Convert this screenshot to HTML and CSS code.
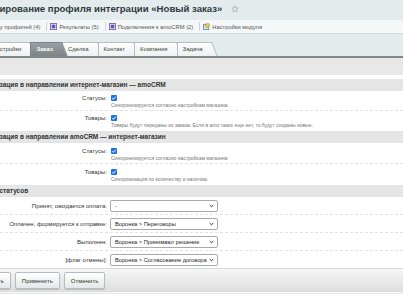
FILE: index.html
```html
<!DOCTYPE html>
<html lang="ru">
<head>
<meta charset="utf-8">
<link rel="stylesheet" href="styles.css">
</head>
<body>
<div class="hdr">
  <h1 class="title">Редактирование профиля интеграции «Новый заказ»</h1>
  <svg class="star" viewBox="0 0 10 10"><path d="M5 0.8 L6.2 3.6 L9.2 3.8 L6.9 5.8 L7.6 8.8 L5 7.2 L2.4 8.8 L3.1 5.8 L0.8 3.8 L3.8 3.6 Z" fill="none" stroke="#9aa4a8" stroke-width="0.8"/></svg>
</div>
<div class="toolbar">
  <span class="tb-item tb-first">К списку профилей (4)</span>
  <span class="sep"></span>
  <span class="tb-item"><svg class="ico" viewBox="0 0 8 8"><rect x="0.5" y="0.5" width="7" height="7" fill="#e9e4f5" stroke="#7a5fb8"/><rect x="2" y="2" width="4" height="4" fill="#6a4fb0"/></svg>Результаты (5)</span>
  <span class="sep"></span>
  <span class="tb-item"><svg class="ico" viewBox="0 0 8 8"><rect x="0.5" y="0.5" width="7" height="7" fill="#e9e4f5" stroke="#7a5fb8"/><rect x="2" y="2" width="4" height="4" fill="#6a4fb0"/></svg>Подключения к amoCRM (2)</span>
  <span class="sep"></span>
  <span class="tb-item"><svg class="ico" viewBox="0 0 8 8"><rect x="0.5" y="1.5" width="6" height="6" fill="#cfe0f2" stroke="#6d8fb5"/><circle cx="5.2" cy="2.8" r="2.3" fill="#f2c84b" stroke="#b08a1c" stroke-width="0.6"/></svg>Настройки модуля</span>
</div>
<div class="tabs">
  <div class="tab tab-first">Настройки</div>
  <div class="tab active">Заказ</div>
  <div class="tab">Сделка</div>
  <div class="tab">Контакт</div>
  <div class="tab">Компания</div>
  <div class="tab">Задача</div>
</div>
<div class="panel">
  <div class="subbar"></div>
  <div class="form">
    <div class="heading"><span class="h-a">Синхронизация в направлении интернет-магазин — amoCRM</span></div>
    <div class="row">
      <div class="label">Статусы:</div>
      <div class="field"><span class="check"><svg viewBox="0 0 8 8"><path d="M1.6 4.2 L3.3 5.8 L6.4 2.2" fill="none" stroke="#fff" stroke-width="1.3"/></svg></span><div class="note">Синхронизируется согласно настройкам магазина</div></div>
    </div>
    <div class="row end">
      <div class="label">Товары:</div>
      <div class="field"><span class="check"><svg viewBox="0 0 8 8"><path d="M1.6 4.2 L3.3 5.8 L6.4 2.2" fill="none" stroke="#fff" stroke-width="1.3"/></svg></span><div class="note">Товары будут переданы из заказа. Если в amo таких еще нет, то будут созданы новые.</div></div>
    </div>
    <div class="heading"><span class="h-a">Синхронизация в направлении amoCRM — интернет-магазин</span></div>
    <div class="row tall">
      <div class="label">Статусы:</div>
      <div class="field"><span class="check"><svg viewBox="0 0 8 8"><path d="M1.6 4.2 L3.3 5.8 L6.4 2.2" fill="none" stroke="#fff" stroke-width="1.3"/></svg></span><div class="note">Синхронизируется согласно настройкам магазина</div></div>
    </div>
    <div class="row tall end">
      <div class="label">Товары:</div>
      <div class="field"><span class="check"><svg viewBox="0 0 8 8"><path d="M1.6 4.2 L3.3 5.8 L6.4 2.2" fill="none" stroke="#fff" stroke-width="1.3"/></svg></span><div class="note">Синхронизация по количеству и наличию</div></div>
    </div>
    <div class="heading"><span class="h-b">Соответствие статусов</span></div>
    <div class="srow">
      <div class="label">Принят, ожидается оплата:</div>
      <div class="select"><span>-</span><svg class="chev" viewBox="0 0 6 4"><path d="M0.8 0.8 L3 3 L5.2 0.8" fill="none" stroke="#222" stroke-width="1.1"/></svg></div>
    </div>
    <div class="srow">
      <div class="label">Оплачен, формируется к отправке:</div>
      <div class="select"><span>Воронка &gt; Переговоры</span><svg class="chev" viewBox="0 0 6 4"><path d="M0.8 0.8 L3 3 L5.2 0.8" fill="none" stroke="#222" stroke-width="1.1"/></svg></div>
    </div>
    <div class="srow">
      <div class="label">Выполнен:</div>
      <div class="select"><span>Воронка &gt; Принимают решение</span><svg class="chev" viewBox="0 0 6 4"><path d="M0.8 0.8 L3 3 L5.2 0.8" fill="none" stroke="#222" stroke-width="1.1"/></svg></div>
    </div>
    <div class="srow last">
      <div class="label">[флаг отмены]:</div>
      <div class="select"><span>Воронка &gt; Согласование договора</span><svg class="chev" viewBox="0 0 6 4"><path d="M0.8 0.8 L3 3 L5.2 0.8" fill="none" stroke="#222" stroke-width="1.1"/></svg></div>
    </div>
  </div>
</div>
<div class="buttons">
  <button class="btn btn-first">Сохранить</button>
  <button class="btn">Применить</button>
  <button class="btn">Отменить</button>
</div>
</body>
</html>
```
FILE: styles.css
```css
html, body {
  margin: 0;
  padding: 0;
}
body {
  width: 403px;
  height: 294px;
  overflow: hidden;
  background: #e3ebed;
  font-family: "Liberation Sans", Arial, sans-serif;
  color: #333;
}
.hdr {
  display: flex;
  align-items: center;
  height: 17px;
  white-space: nowrap;
}
.title {
  margin: 0 0 0 -33px;
  font-size: 9.6px;
  font-weight: bold;
  color: #2f3a40;
  line-height: 17px;
}
.star {
  width: 8px;
  height: 8px;
  margin-left: 9px;
}
.toolbar {
  margin-top: 3px;
  height: 13px;
  display: flex;
  align-items: center;
  background: #f5f8f8;
  border-bottom: 1px solid #d3dcdf;
  font-size: 5.8px;
  color: #555;
  white-space: nowrap;
}
.tb-item {
  display: flex;
  align-items: center;
}
.tb-first {
  margin-left: -20px;
}
.ico {
  width: 7px;
  height: 7px;
  margin-right: 2px;
}
.sep {
  width: 1px;
  height: 9px;
  background: #cdd5d8;
  margin: 0 3px 0 6px;
}
.tabs {
  margin-top: 6px;
  height: 16px;
  display: flex;
  align-items: flex-end;
  font-size: 6px;
  color: #444;
  white-space: nowrap;
}
.tab {
  position: relative;
  height: 14px;
  line-height: 14px;
  padding: 0 12px 0 6px;
  margin-right: -3px;
  z-index: 1;
}
.tab::before {
  content: "";
  position: absolute;
  left: 0;
  top: 0;
  bottom: 0;
  right: 8px;
  background: linear-gradient(#fdfefe, #edf1f2);
  border-left: 1px solid #b3bec2;
  border-top: 1px solid #b3bec2;
  z-index: -1;
}
.tab::after {
  content: "";
  position: absolute;
  top: 0;
  bottom: 0;
  right: 3px;
  width: 10px;
  background: linear-gradient(#fdfefe, #edf1f2);
  border-top: 1px solid #b3bec2;
  border-right: 1px solid #b3bec2;
  transform: skewX(22deg);
  transform-origin: top left;
  z-index: -1;
}
.tab-first {
  padding-left: 0;
  margin-left: -8px;
}
.tab.active {
  color: #fff;
  font-weight: bold;
  z-index: 2;
}
.tab.active::before,
.tab.active::after {
  background: linear-gradient(#9aa0a3, #7d8487);
  border-color: #7b8285;
}
.panel {
  background: #fff;
}
.subbar {
  height: 17px;
  background: #e8e8e8;
  border-top: 2px solid #80878a;
  margin-bottom: 4px;
}
.heading {
  height: 12px;
  line-height: 12px;
  background: #e5e5e5;
  font-size: 6.5px;
  font-weight: bold;
  color: #333;
  white-space: nowrap;
}
.h-a {
  margin-left: -32.5px;
}
.h-b {
  margin-left: -47px;
}
.row {
  display: grid;
  grid-template-columns: 107px 1fr;
  column-gap: 4px;
  height: 20px;
  padding-top: 3px;
  box-sizing: border-box;
  border-bottom: 1px dashed #e2e2e2;
}
.row.tall {
  height: 21px;
  padding-top: 4px;
}
.row.end {
  border-bottom: none;
}
.label {
  font-size: 6px;
  line-height: 8px;
  text-align: right;
  color: #333;
  white-space: nowrap;
}
.field {
  display: flex;
  flex-direction: column;
  align-items: flex-start;
}
.check {
  display: block;
  width: 6px;
  height: 6px;
  margin-top: 1px;
  background: #1a73e8;
  border-radius: 1px;
}
.check svg {
  display: block;
  width: 6px;
  height: 6px;
}
.note {
  margin-top: 1px;
  font-size: 5px;
  line-height: 6px;
  color: #777;
  white-space: nowrap;
}
.srow {
  display: grid;
  grid-template-columns: 107px 108px;
  column-gap: 3px;
  align-items: center;
  height: 18px;
  box-sizing: border-box;
  border-bottom: 1px dashed #e2e2e2;
}
.srow.last {
  border-bottom: 1px solid #d8d8d8;
}
.srow .label {
  line-height: 12px;
}
.select {
  height: 12px;
  box-sizing: border-box;
  border: 1px solid #a9a9a9;
  border-radius: 2px;
  background: #fff;
  display: flex;
  align-items: center;
  justify-content: space-between;
  padding: 0 3px 0 4px;
  font-size: 5.7px;
  color: #222;
  white-space: nowrap;
}
.chev {
  width: 5px;
  height: 4px;
}
.buttons {
  height: 23px;
  display: flex;
  align-items: center;
  gap: 4px;
  background: linear-gradient(#f6f6f6, #dedede);
  border-bottom: 1px solid #f4f7f8;
}
.btn {
  height: 17px;
  padding: 0 6px;
  border: 1px solid #b6bdc0;
  border-radius: 2px;
  background: linear-gradient(#ffffff, #e4e8e9);
  box-shadow: 0 1px 1px rgba(0, 0, 0, 0.15);
  font-family: "Liberation Sans", Arial, sans-serif;
  font-size: 6px;
  color: #333;
}
.btn-first {
  margin-left: -33px;
}
```
